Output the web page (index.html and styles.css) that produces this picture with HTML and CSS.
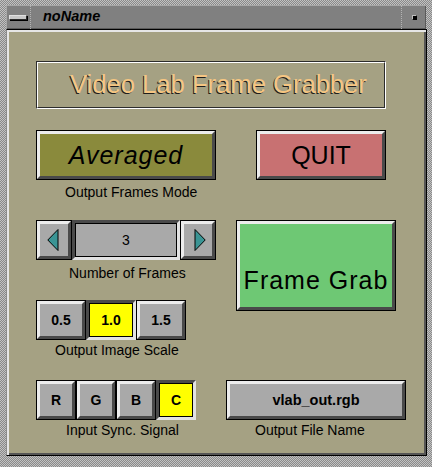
FILE: index.html
```html
<!DOCTYPE html>
<html>
<head>
<meta charset="utf-8">
<link rel="stylesheet" href="styles.css">
</head>
<body>
<div class="window">
  <div class="titlebar">
    <div class="tb-btn"><span class="menu-bar"></span></div>
    <div class="tb-title">noName</div>
    <div class="tb-btn"><span class="max-dot"></span></div>
  </div>
  <div class="content">
    <div class="panel">
      <div class="banner"><div class="banner-in">Video Lab Frame Grabber</div></div>

      <div class="group g-mode">
        <div class="btn btn-mode"><div class="face">Averaged</div></div>
        <div class="label l-mode">Output Frames Mode</div>
      </div>

      <div class="btn btn-quit"><div class="face">QUIT</div></div>

      <div class="group g-frames">
        <div class="spinner">
          <div class="btn arrow"><div class="face">
            <svg width="12" height="22" viewBox="0 0 12 22"><polygon points="11,0.5 0.8,11 11,21.5" fill="#3a9494" stroke="#000" stroke-width="1"/></svg>
          </div></div>
          <div class="field"><div class="field-in">3</div></div>
          <div class="btn arrow"><div class="face">
            <svg width="12" height="22" viewBox="0 0 12 22"><polygon points="1,0.5 11.2,11 1,21.5" fill="#3a9494" stroke="#000" stroke-width="1"/></svg>
          </div></div>
        </div>
        <div class="label l-frames">Number of Frames</div>
      </div>

      <div class="btn btn-grab"><div class="face">Frame Grab</div></div>

      <div class="group g-scale">
        <div class="row">
          <div class="btn small w50"><div class="face">0.5</div></div>
          <div class="btn small w50 sel"><div class="face">1.0</div></div>
          <div class="btn small w50"><div class="face">1.5</div></div>
        </div>
        <div class="label l-scale">Output Image Scale</div>
      </div>

      <div class="group g-sync">
        <div class="row">
          <div class="btn small w40"><div class="face">R</div></div>
          <div class="btn small w40"><div class="face">G</div></div>
          <div class="btn small w40"><div class="face">B</div></div>
          <div class="btn small w40 sel"><div class="face">C</div></div>
        </div>
        <div class="label l-sync">Input Sync. Signal</div>
      </div>

      <div class="group g-file">
        <div class="btn btn-file"><div class="face">vlab_out.rgb</div></div>
        <div class="label l-file">Output File Name</div>
      </div>
    </div>
  </div>
</div>
</body>
</html>
```

FILE: styles.css
```css
html, body {
  margin: 0;
  padding: 0;
  background: #a8a8a8;
}

.window {
  width: 432px;
  height: 467px;
  box-sizing: border-box;
  padding: 5px 5px 0 6px;
  background: repeating-conic-gradient(#8a8a8a 0 25%, #c2c2c2 0 50%) 0 0 / 2px 2px;
  font-family: "Liberation Sans", Arial, sans-serif;
  overflow: hidden;
}

/* title bar */
.titlebar {
  display: flex;
  width: 420px;
  height: 24px;
  background: #808080;
  box-shadow: inset 1px 1px 0 #a8a8a8, inset -1px -1px 0 #5a5a5a;
}

.tb-btn {
  width: 24px;
  flex: none;
  display: flex;
  align-items: center;
  justify-content: center;
}

.menu-bar {
  display: block;
  width: 16px;
  height: 3px;
  background: #c8c8c8;
  border: 1px solid #2a2a2a;
  border-top-color: #e0e0e0;
  border-left-color: #e0e0e0;
  box-shadow: 1px 1px 0 #000;
  margin-top: 1px;
}

.max-dot {
  display: block;
  width: 3px;
  height: 3px;
  background: #000;
  border: 1px solid #000;
  border-top-color: #bdbdbd;
  border-left-color: #bdbdbd;
  margin-top: 1px;
}

.tb-title {
  flex: 1;
  display: flex;
  align-items: center;
  padding: 0 0 2px 12px;
  font-size: 14.5px;
  font-weight: bold;
  font-style: italic;
  color: #000;
  border-left: 1px dotted #b4b4b4;
  border-right: 1px dotted #b4b4b4;
}

/* content area */
.content {
  box-sizing: border-box;
  width: 421px;
  height: 427px;
  background: #a5a183;
  border: 1px solid #000;
  border-left-color: #8c8c8c;
  box-shadow: inset 2px 2px 0 #e6e6e6, inset -2px -2px 0 #555;
  padding: 31px 0 0 29px;
}

.panel {
  display: grid;
  grid-template-columns: 190px 180px;
  grid-template-rows: 49px 70px 60px 60px auto;
  row-gap: 20px;
  align-items: start;
}

/* banner */
.banner {
  grid-column: 1 / 3;
  grid-row: 1;
  width: 350px;
  height: 48px;
  box-sizing: border-box;
  border: 1px solid;
  border-color: #2c2c2c #ffffff #ffffff #2c2c2c;
}

.banner-in {
  box-sizing: border-box;
  height: 100%;
  border: 1px solid;
  border-color: #ffffff #2c2c2c #2c2c2c #ffffff;
  display: flex;
  align-items: center;
  padding: 0 0 1px 32px;
  font-size: 25.6px;
  color: #f6c682;
  text-shadow: -1px 1px 0 #1e1e1e;
}

/* generic buttons */
.btn {
  box-sizing: border-box;
  border: 1px solid #000;
}

.btn .face {
  box-sizing: border-box;
  height: 100%;
  border: 3px solid;
  border-color: #ececec #4a4a4a #4a4a4a #ececec;
  display: flex;
  align-items: center;
  justify-content: center;
  background: #a9a9a9;
  color: #000;
}

.btn.sel {
  border: 3px solid;
  border-color: #4a4a4a #e2e2e2 #e2e2e2 #4a4a4a;
}

.btn.sel .face {
  border: 1px solid #000;
  background: #ffff00;
}

.group {
  display: flex;
  flex-direction: column;
  align-items: flex-start;
}

.label {
  font-size: 14px;
  line-height: 16px;
  color: #000;
  white-space: nowrap;
}

.g-mode { grid-column: 1; grid-row: 2; }
.btn-mode { width: 180px; height: 50px; }
.btn-mode .face {
  background: #8a8a3c;
  font-size: 25px;
  font-style: italic;
  letter-spacing: 1px;
}
.l-mode { margin: 4px 0 0 29px; }

.btn-quit {
  grid-column: 2;
  grid-row: 2;
  margin-left: 30px;
  width: 130px;
  height: 50px;
}
.btn-quit .face {
  background: #c87172;
  font-size: 25px;
}

/* spinner */
.g-frames { grid-column: 1; grid-row: 3; }
.spinner {
  display: flex;
  height: 40px;
}
.arrow { width: 36px; height: 40px; }
.arrow .face svg { display: block; }
.arrow:first-child .face svg { margin-left: -3px; }
.arrow:last-child .face svg { margin-left: 3px; }

.field {
  box-sizing: border-box;
  width: 108px;
  height: 40px;
  border: 3px solid;
  border-color: #4a4a4a #e2e2e2 #e2e2e2 #4a4a4a;
}
.field-in {
  box-sizing: border-box;
  height: 100%;
  border: 1px solid #000;
  background: #a9a9a9;
  display: flex;
  align-items: center;
  justify-content: center;
  font-size: 14px;
}
.l-frames { margin: 5px 0 0 33px; }

/* frame grab */
.btn-grab {
  grid-column: 2;
  grid-row: 3 / 5;
  margin-left: 10px;
  width: 160px;
  height: 91px;
}
.btn-grab .face {
  background: #6ec874;
  font-size: 25px;
  letter-spacing: 1px;
  padding-top: 30px;
}

/* small button rows */
.row { display: flex; height: 40px; }
.small { height: 40px; }
.small .face { font-size: 14px; font-weight: bold; }
.w50 { width: 50px; }
.w40 { width: 40px; }

.g-scale { grid-column: 1; grid-row: 4; }
.l-scale { margin: 2px 0 0 19px; }

.g-sync { grid-column: 1; grid-row: 5; }
.l-sync { margin: 2px 0 0 30px; }

.g-file { grid-column: 2; grid-row: 5; }
.btn-file { width: 180px; height: 40px; }
.btn-file .face { font-size: 14.5px; font-weight: bold; }
.l-file { margin: 2px 0 0 29px; }
```
